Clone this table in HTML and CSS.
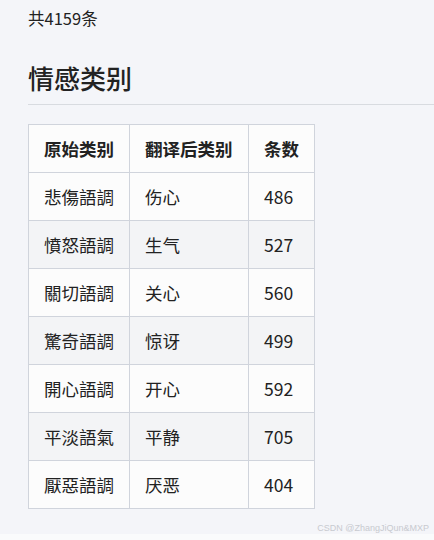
FILE: index.html
```html
<!DOCTYPE html>
<html lang="zh">
<head>
<meta charset="utf-8">
<link rel="stylesheet" href="styles.css">
</head>
<body>
<div class="page">
  <p class="count">共4159条</p>
  <h2 class="title">情感类别</h2>
  <table class="tbl">
    <thead>
      <tr><th class="c1">原始类别</th><th class="c2">翻译后类别</th><th class="c3">条数</th></tr>
    </thead>
    <tbody>
      <tr><td>悲傷語調</td><td>伤心</td><td>486</td></tr>
      <tr><td>憤怒語調</td><td>生气</td><td>527</td></tr>
      <tr><td>關切語調</td><td>关心</td><td>560</td></tr>
      <tr><td>驚奇語調</td><td>惊讶</td><td>499</td></tr>
      <tr><td>開心語調</td><td>开心</td><td>592</td></tr>
      <tr><td>平淡語氣</td><td>平静</td><td>705</td></tr>
      <tr><td>厭惡語調</td><td>厌恶</td><td>404</td></tr>
    </tbody>
  </table>
  <div class="mark">CSDN @ZhangJiQun&amp;MXP</div>
</div>
<div class="strip"></div>
</body>
</html>
```
FILE: styles.css
```css
html, body {
  margin: 0;
  padding: 0;
  background: #f4f5f9;
  overflow: hidden;
}
body {
  font-family: "Noto Sans CJK SC", "Noto Sans", sans-serif;
  color: #222;
  width: 434px;
  height: 540px;
  position: relative;
}
.page {
  padding: 0 0 0 28px;
  height: 534px;
  position: relative;
}
.count {
  margin: 0;
  padding-top: 6px;
  font-size: 16.5px;
  line-height: 24px;
  color: #222;
}
.title {
  margin: 28px 0 0 0;
  font-size: 26px;
  font-weight: 500;
  line-height: 40px;
  padding-bottom: 6px;
  border-bottom: 1px solid #d8dbe0;
  color: #222;
}
.tbl {
  margin-top: 19px;
  border-collapse: collapse;
  font-size: 17.5px;
}
.tbl th, .tbl td {
  border: 1px solid #d0d4dc;
  height: 48px;
  padding: 0 15px;
  text-align: left;
  box-sizing: border-box;
  line-height: 24px;
}
.tbl th {
  font-weight: 700;
  background: #fcfcfc;
}
.tbl .c1 { width: 101px; }
.tbl .c2 { width: 119px; }
.tbl .c3 { width: 66px; }
.tbl tbody tr { background: #fcfcfc; }
.tbl tbody tr:nth-child(even) { background: #f3f4f6; }
.mark {
  position: absolute;
  right: 5px;
  bottom: 1px;
  font-family: "Liberation Sans", sans-serif;
  font-size: 9px;
  color: #c8cad0;
}
.strip {
  height: 6px;
  background: #fafbfc;
}
```
